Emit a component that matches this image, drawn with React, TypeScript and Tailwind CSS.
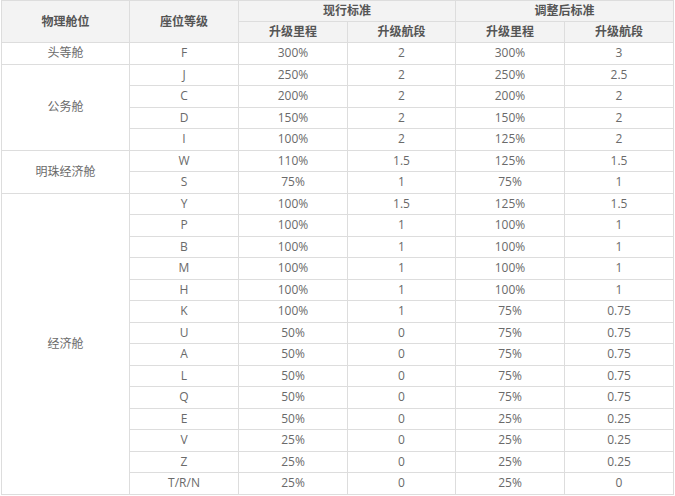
import React from "react";

type Row = { cabin?: string; span?: number; cls: string; a: string; b: string; c: string; d: string };

const rows: Row[] = [
  { cabin: "头等舱", span: 1, cls: "F", a: "300%", b: "2", c: "300%", d: "3" },
  { cabin: "公务舱", span: 4, cls: "J", a: "250%", b: "2", c: "250%", d: "2.5" },
  { cls: "C", a: "200%", b: "2", c: "200%", d: "2" },
  { cls: "D", a: "150%", b: "2", c: "150%", d: "2" },
  { cls: "I", a: "100%", b: "2", c: "125%", d: "2" },
  { cabin: "明珠经济舱", span: 2, cls: "W", a: "110%", b: "1.5", c: "125%", d: "1.5" },
  { cls: "S", a: "75%", b: "1", c: "75%", d: "1" },
  { cabin: "经济舱", span: 14, cls: "Y", a: "100%", b: "1.5", c: "125%", d: "1.5" },
  { cls: "P", a: "100%", b: "1", c: "100%", d: "1" },
  { cls: "B", a: "100%", b: "1", c: "100%", d: "1" },
  { cls: "M", a: "100%", b: "1", c: "100%", d: "1" },
  { cls: "H", a: "100%", b: "1", c: "100%", d: "1" },
  { cls: "K", a: "100%", b: "1", c: "75%", d: "0.75" },
  { cls: "U", a: "50%", b: "0", c: "75%", d: "0.75" },
  { cls: "A", a: "50%", b: "0", c: "75%", d: "0.75" },
  { cls: "L", a: "50%", b: "0", c: "75%", d: "0.75" },
  { cls: "Q", a: "50%", b: "0", c: "75%", d: "0.75" },
  { cls: "E", a: "50%", b: "0", c: "25%", d: "0.25" },
  { cls: "V", a: "25%", b: "0", c: "25%", d: "0.25" },
  { cls: "Z", a: "25%", b: "0", c: "25%", d: "0.25" },
  { cls: "T/R/N", a: "25%", b: "0", c: "25%", d: "0" },
];

const td = "border border-[#dddddd] text-center align-middle p-0 leading-none";
const th = "border border-[#dddddd] text-center align-middle p-0 leading-none font-bold text-[#555555] bg-[#f3f3f3]";

export default function App() {
  return (
    <div className="w-[675px] h-[496px] bg-white overflow-hidden">
      <table
        className="ml-[1px] w-[672px] table-fixed border-collapse text-[12px] text-[#6a6a6a]"
        style={{ fontFamily: '"Open Sans", "Noto Sans CJK SC", sans-serif' }}
      >
        <colgroup>
          <col className="w-[128px]" />
          <col className="w-[109px]" />
          <col className="w-[109px]" />
          <col className="w-[108px]" />
          <col className="w-[109px]" />
          <col className="w-[109px]" />
        </colgroup>
        <thead>
          <tr className="h-[21px]">
            <th rowSpan={2} className={th}>物理舱位</th>
            <th rowSpan={2} className={th}>座位等级</th>
            <th colSpan={2} className={th}>现行标准</th>
            <th colSpan={2} className={th}>调整后标准</th>
          </tr>
          <tr className="h-[21px]">
            <th className={th}>升级里程</th>
            <th className={th}>升级航段</th>
            <th className={th}>升级里程</th>
            <th className={th}>升级航段</th>
          </tr>
        </thead>
        <tbody>
          {rows.map((r, i) => (
            <tr key={i} className="h-[21.5px]">
              {r.cabin !== undefined && (
                <td rowSpan={r.span} className={td}>{r.cabin}</td>
              )}
              <td className={td}>{r.cls}</td>
              <td className={td}>{r.a}</td>
              <td className={td}>{r.b}</td>
              <td className={td}>{r.c}</td>
              <td className={td}>{r.d}</td>
            </tr>
          ))}
        </tbody>
      </table>
    </div>
  );
}
